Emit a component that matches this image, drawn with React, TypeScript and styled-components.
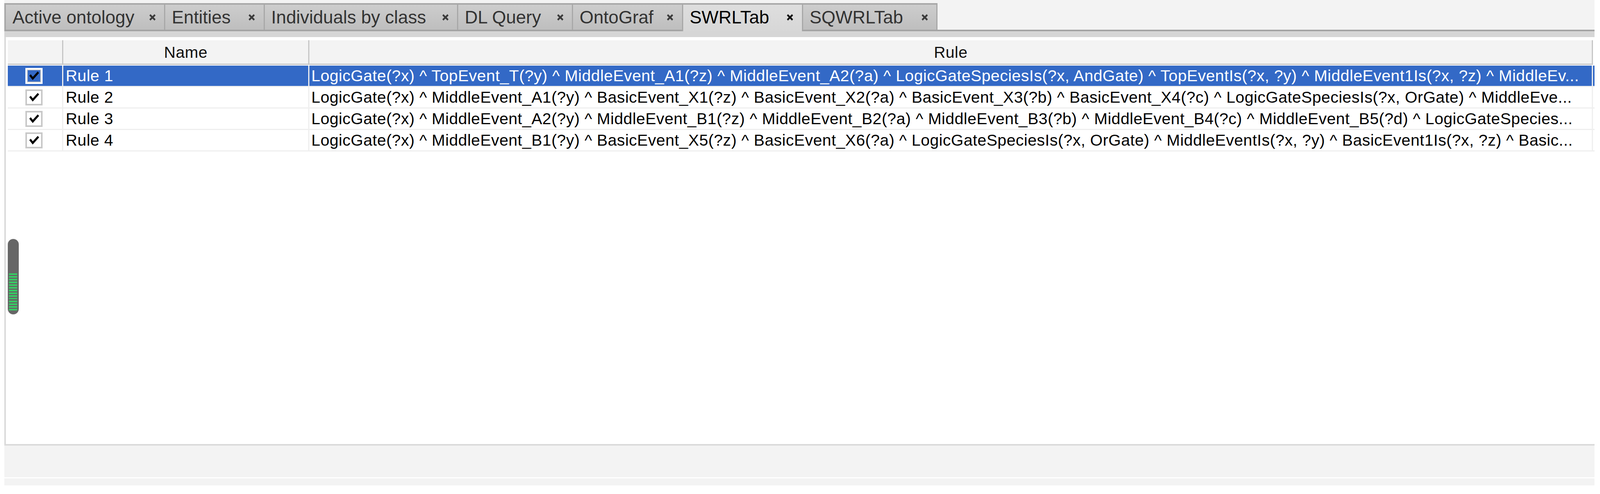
import React from "react";
import styled, { createGlobalStyle } from "styled-components";

// Horizontal measures are taken from the 4390px-wide reference and scaled to the viewport width.
const hx = (n: number) => `calc(${n} * 100vw / 4390)`;

const GlobalStyle = createGlobalStyle`
  html, body { margin: 0; padding: 0; background: #ffffff; overflow: hidden; }
  body { font-family: "Liberation Sans", Arial, sans-serif; }
  * { box-sizing: border-box; }
`;

const Frame = styled.div`
  height: 100vh;
  margin: 0 ${hx(15)} 0 ${hx(12)};
  padding-bottom: 22px;
  display: flex;
  flex-direction: column;
`;

const TabBar = styled.div`
  flex: none;
  display: flex;
  align-items: flex-end;
  height: 80px;
  padding-top: 8px;
  background: #f3f3f3;
  border-bottom: 4px solid #a4a4a4;
`;

const Tab = styled.div<{ $w: number; $selected?: boolean; $last?: boolean; $first?: boolean }>`
  position: relative;
  z-index: ${(p) => (p.$selected ? 1 : 0)};
  flex: none;
  width: ${(p) => hx(p.$w)};
  height: ${(p) => (p.$selected ? 72 : 68)}px;
  margin-bottom: ${(p) => (p.$selected ? -4 : 0)}px;
  display: flex;
  align-items: center;
  justify-content: space-between;
  padding: 0 ${hx(22)} ${(p) => (p.$selected ? 4 : 0)}px ${hx(18)};
  border-top: 4px solid #a8a8a8;
  border-left: ${(p) => (p.$first ? 4 : 3)}px solid #a8a8a8;
  border-right: ${(p) => (p.$last ? "3px solid #a8a8a8" : "none")};
  background: ${(p) =>
    p.$selected
      ? "linear-gradient(#dedede, #d7d7d7)"
      : "linear-gradient(#cdcdcd, #bebebe)"};
  color: ${(p) => (p.$selected ? "#000" : "#333")};
  font-size: 46px;
  white-space: nowrap;
`;

const CloseIcon = styled.svg<{ $selected?: boolean }>`
  width: ${hx(20)};
  height: 19px;
  flex: none;
  color: ${(p) => (p.$selected ? "#111" : "#3a3a3a")};
`;

const SubStrip = styled.div`
  flex: none;
  height: 15px;
  background: #d6d6d6;
`;

const Panel = styled.div`
  position: relative;
  flex: 1;
  min-height: 0;
  background: #ffffff;
  border-left: 4px solid #dadada;
  border-bottom: 4px solid #dadada;
  padding: 8px 0 0 ${hx(5)};
  overflow: hidden;
`;

const COLS = `${hx(152)} ${hx(676)} minmax(0, 1fr) ${hx(4)}`;

const HeaderRow = styled.div`
  display: grid;
  grid-template-columns: ${COLS};
  height: 63px;
`;

const HeaderCell = styled.div<{ $filler?: boolean }>`
  display: flex;
  align-items: center;
  justify-content: center;
  min-width: 0;
  background: ${(p) => (p.$filler ? "#ffffff" : "#f3f3f3")};
  border-bottom: ${(p) => (p.$filler ? "none" : "3px solid #c6c6c6")};
  border-right: ${(p) => (p.$filler ? "none" : "3px solid #c6c6c6")};
  font-size: 41px;
  letter-spacing: 0.5px;
  color: #111;
  padding-top: 2px;
`;

const Body = styled.div`
  padding-top: 2px;
`;

const Row = styled.div<{ $selected?: boolean }>`
  display: grid;
  grid-template-columns: ${COLS};
  height: 55px;
  border-bottom: 3px solid #efefef;
  background: ${(p) => (p.$selected ? "#3369c6" : "#ffffff")};
  color: ${(p) => (p.$selected ? "#ffffff" : "#000000")};
`;

const Cell = styled.div<{ $center?: boolean; $pad?: number }>`
  display: flex;
  align-items: center;
  justify-content: ${(p) => (p.$center ? "center" : "flex-start")};
  padding-left: ${(p) => hx(p.$pad ?? 0)};
  border-right: 3px solid #efefef;
  min-width: 0;
  overflow: hidden;
  font-size: 41px;
  letter-spacing: 0.55px;
`;

const FillerCell = styled.div``;

const CellText = styled.span`
  display: block;
  flex: 1 1 auto;
  white-space: nowrap;
  overflow: hidden;
  text-overflow: ellipsis;
  min-width: 0;
`;

const CheckBox = styled.div<{ $selected?: boolean }>`
  width: ${hx(47)};
  height: 41px;
  display: flex;
  align-items: center;
  justify-content: center;
  border: 4px solid ${(p) => (p.$selected ? "#ffffff" : "#c8c8c8")};
  background: ${(p) => (p.$selected ? "#3369c6" : "#ffffff")};
  box-shadow: ${(p) => (p.$selected ? "inset 0 0 0 2px #c8c8c8" : "none")};
  margin-right: ${hx(4)};
`;

const CheckMark = styled.svg`
  width: ${hx(27)};
  height: 22px;
`;

const OverlayThumb = styled.div`
  position: absolute;
  left: ${hx(5)};
  top: 517px;
  width: ${hx(30)};
  height: 193px;
  border-radius: 15px;
  background: #666666;
  box-shadow: 0 0 6px rgba(0, 0, 0, 0.08);
`;

const ThumbGrip = styled.div`
  position: absolute;
  left: ${hx(3)};
  right: ${hx(4)};
  bottom: 7px;
  height: 98px;
  background: repeating-linear-gradient(
    to bottom,
    #35cf63 0px,
    #35cf63 3.5px,
    transparent 3.5px,
    transparent 7px
  );
`;

const StatusArea = styled.div`
  flex: none;
  height: 81px;
  background: #f3f3f3;
`;

const BottomBar = styled.div`
  flex: none;
  height: 18px;
  margin-top: 3px;
  background: #f3f3f3;
`;

type TabDef = { label: string; width: number; selected?: boolean };

const tabs: TabDef[] = [
  { label: "Active ontology", width: 438 },
  { label: "Entities", width: 273 },
  { label: "Individuals by class", width: 531 },
  { label: "DL Query", width: 315 },
  { label: "OntoGraf", width: 302 },
  { label: "SWRLTab", width: 329, selected: true },
  { label: "SQWRLTab", width: 372 },
];

type RuleDef = { name: string; rule: string; selected?: boolean };

// Rule bodies as the table shows them, already shortened to the column width.
const rules: RuleDef[] = [
  {
    name: "Rule 1",
    selected: true,
    rule:
      "LogicGate(?x) ^ TopEvent_T(?y) ^ MiddleEvent_A1(?z) ^ MiddleEvent_A2(?a) ^ LogicGateSpeciesIs(?x, AndGate) ^ TopEventIs(?x, ?y) ^ MiddleEvent1Is(?x, ?z) ^ MiddleEv...",
  },
  {
    name: "Rule 2",
    rule:
      "LogicGate(?x) ^ MiddleEvent_A1(?y) ^ BasicEvent_X1(?z) ^ BasicEvent_X2(?a) ^ BasicEvent_X3(?b) ^ BasicEvent_X4(?c) ^ LogicGateSpeciesIs(?x, OrGate) ^ MiddleEve...",
  },
  {
    name: "Rule 3",
    rule:
      "LogicGate(?x) ^ MiddleEvent_A2(?y) ^ MiddleEvent_B1(?z) ^ MiddleEvent_B2(?a) ^ MiddleEvent_B3(?b) ^ MiddleEvent_B4(?c) ^ MiddleEvent_B5(?d) ^ LogicGateSpecies...",
  },
  {
    name: "Rule 4",
    rule:
      "LogicGate(?x) ^ MiddleEvent_B1(?y) ^ BasicEvent_X5(?z) ^ BasicEvent_X6(?a) ^ LogicGateSpeciesIs(?x, OrGate) ^ MiddleEventIs(?x, ?y) ^ BasicEvent1Is(?x, ?z) ^ Basic...",
  },
];

function Close({ selected }: { selected?: boolean }) {
  return (
    <CloseIcon $selected={selected} viewBox="0 0 20 19" preserveAspectRatio="none">
      <path d="M3 3 L17 16 M17 3 L3 16" stroke="currentColor" strokeWidth="4.5" fill="none" />
    </CloseIcon>
  );
}

function Check() {
  return (
    <CheckMark viewBox="0 0 27 22" preserveAspectRatio="none">
      <polyline points="2,9 9.5,18 25,2" stroke="#000" strokeWidth="5.5" fill="none" />
    </CheckMark>
  );
}

export default function App() {
  return (
    <>
      <GlobalStyle />
      <Frame>
        <TabBar>
          {tabs.map((t, i) => (
            <Tab
              key={t.label}
              $w={t.width}
              $selected={t.selected}
              $first={i === 0}
              $last={i === tabs.length - 1}
            >
              <span>{t.label}</span>
              <Close selected={t.selected} />
            </Tab>
          ))}
        </TabBar>
        <SubStrip />
        <Panel>
          <HeaderRow>
            <HeaderCell />
            <HeaderCell>Name</HeaderCell>
            <HeaderCell>Rule</HeaderCell>
            <HeaderCell $filler />
          </HeaderRow>
          <Body>
            {rules.map((r) => (
              <Row key={r.name} $selected={r.selected}>
                <Cell $center>
                  <CheckBox $selected={r.selected}>
                    <Check />
                  </CheckBox>
                </Cell>
                <Cell $pad={7}>
                  <CellText>{r.name}</CellText>
                </Cell>
                <Cell $pad={5}>
                  <CellText>{r.rule}</CellText>
                </Cell>
                <FillerCell />
              </Row>
            ))}
          </Body>
          <OverlayThumb>
            <ThumbGrip />
          </OverlayThumb>
        </Panel>
        <StatusArea />
        <BottomBar />
      </Frame>
    </>
  );
}
